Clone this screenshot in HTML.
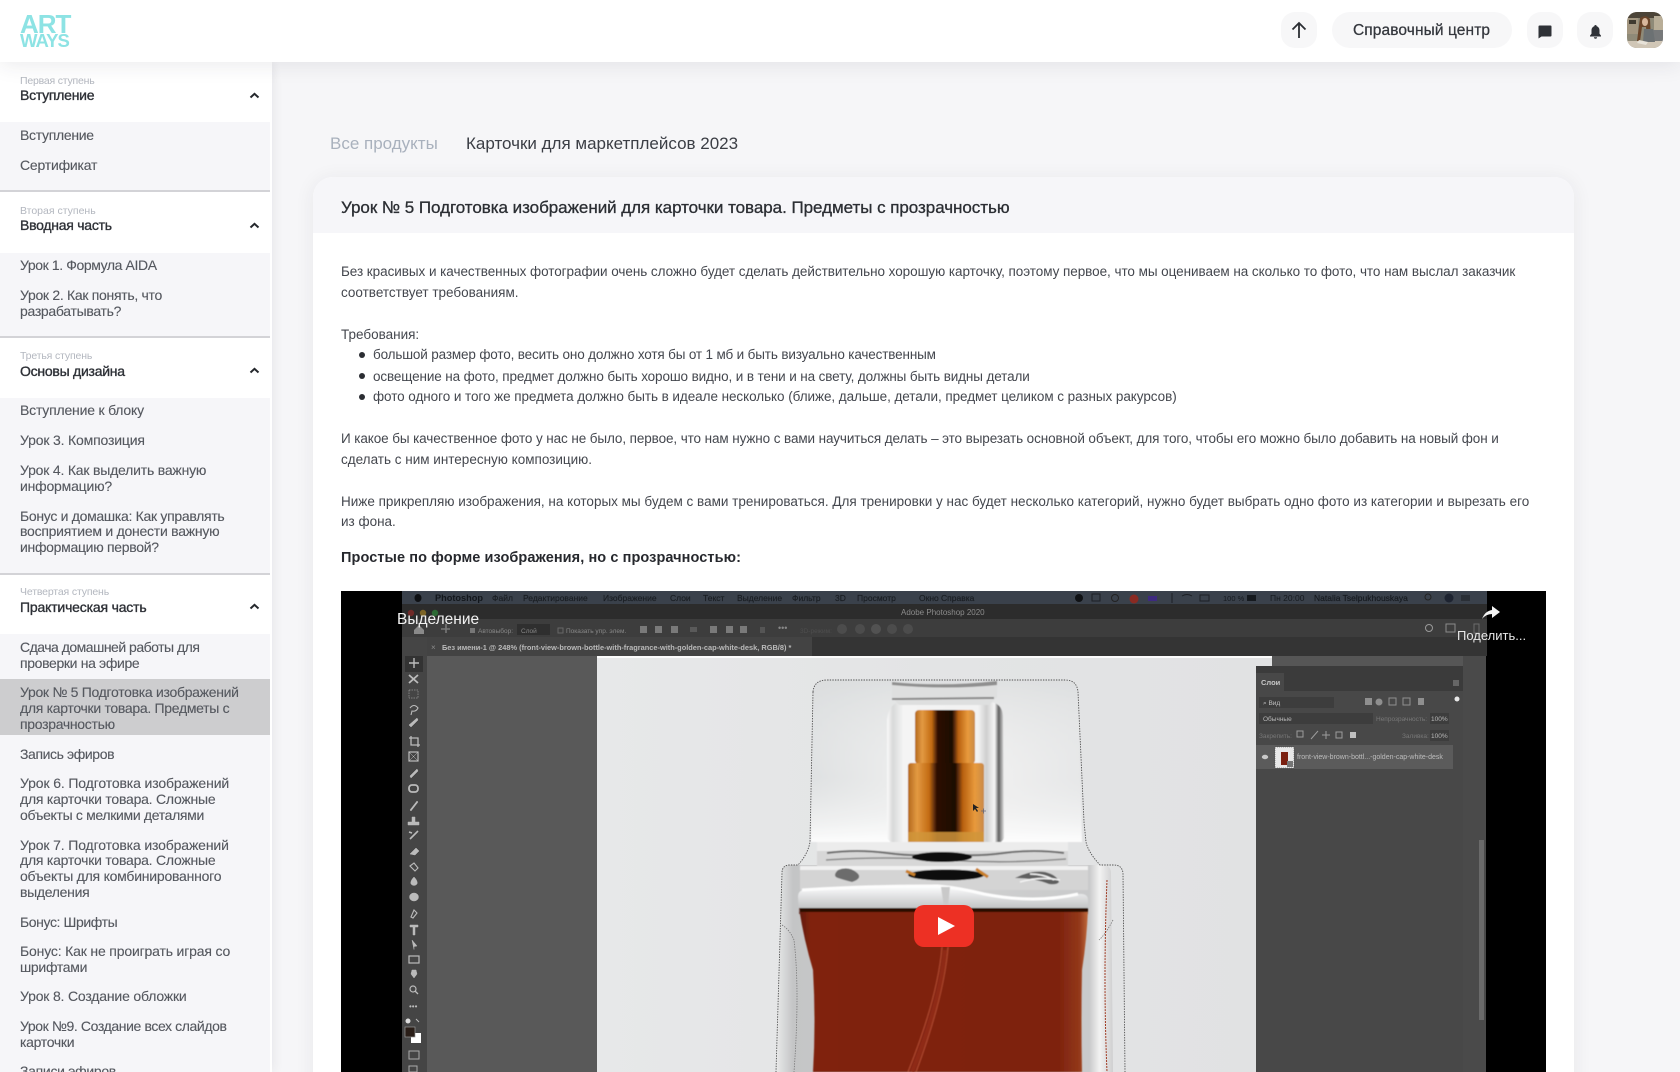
<!DOCTYPE html>
<html lang="ru">
<head>
<meta charset="utf-8">
<title>Урок № 5</title>
<style>
html,body{margin:0;padding:0;width:1680px;height:1072px;overflow:hidden;background:#f6f6f8}
body{font-family:"Liberation Sans","DejaVu Sans",sans-serif;position:relative}
#wrap{position:absolute;inset:0;overflow:hidden;filter:blur(.35px)}
.t{position:absolute;white-space:nowrap;line-height:20px;height:20px}
header{position:absolute;left:0;top:0;width:1680px;height:62px;background:#fff;box-shadow:0 2px 22px rgba(40,40,60,.10);z-index:5}
.btn{position:absolute;top:12px;height:36px;background:#f7f7f8;border-radius:14px}
aside{position:absolute;left:0;top:62px;width:272px;height:1010px;background:#fff;box-shadow:2px 0 10px rgba(40,40,60,.07);z-index:3}
.bg{position:absolute;left:0;width:270px;background:#f6f6f9}
.div{position:absolute;left:0;width:270px;height:2px;background:#d3d3d7}
.lab{font-size:10.5px;color:#b3b7bf;letter-spacing:-.15px}
.ttl{font-size:14px;color:#2d3036;-webkit-text-stroke:.35px #2d3036;letter-spacing:-.25px}
.it{font-size:14px;color:#55585f;left:20px;letter-spacing:-.3px;-webkit-text-stroke:.12px #55585f}
.chev{position:absolute;left:249px;width:11px;height:7px}
#card{position:absolute;left:313px;top:177px;width:1261px;height:920px;background:#fff;border-radius:20px 20px 0 0;box-shadow:0 2px 20px rgba(40,40,60,.07);z-index:1}
#cardh{position:absolute;left:0;top:0;width:1261px;height:56px;background:#f6f6f9;border-radius:20px 20px 0 0}
.b{font-size:13.5px;color:#44474e;left:341px}
.li{font-size:13.5px;color:#44474e;left:373px}
.dot{position:absolute;left:359px;width:6px;height:6px;border-radius:50%;background:#2b2d33}
#video{position:absolute;left:341px;top:591px;width:1205px;height:481px;z-index:2}
</style>
</head>
<body>
<div id="wrap">

<header>
  <div class="t" style="left:20px;top:12px;font-size:26px;font-weight:bold;color:#8de3e4;letter-spacing:-1px;line-height:24px;height:24px">ART</div>
  <div class="t" style="left:20px;top:31px;font-size:18.5px;font-weight:bold;color:#8de3e4;letter-spacing:-1px">WAYS</div>

  <div class="btn" style="left:1281px;width:36px"></div>
  <svg style="position:absolute;left:1291px;top:21px" width="16" height="18" viewBox="0 0 16 18"><path d="M8 17V2M1.5 8.5L8 2l6.5 6.5" fill="none" stroke="#2b2e33" stroke-width="1.8"/></svg>
  <div class="btn" style="left:1332px;width:180px;border-radius:18px"></div>
  <div class="t" style="left:1353px;top:21px;font-size:15.5px;color:#33363c;-webkit-text-stroke:.25px #33363c;letter-spacing:.1px">Справочный центр</div>
  <div class="btn" style="left:1527px;width:36px"></div>
  <svg style="position:absolute;left:1538px;top:25px" width="14" height="14" viewBox="0 0 14 14"><path d="M1.5 0.5h11a1 1 0 0 1 1 1v9a1 1 0 0 1-1 1H3.5L.5 13.5v-12a1 1 0 0 1 1-1z" fill="#2f3237"/></svg>
  <div class="btn" style="left:1577px;width:36px"></div>
  <svg style="position:absolute;left:1590px;top:25px" width="11" height="14" viewBox="0 0 11 14"><path d="M5.5 0C6.3 0 6.7.6 6.7 1.2 8.6 1.8 9.5 3.4 9.5 5.4v3.4L11 10.6v.9H0v-.9l1.5-1.8V5.4c0-2 .9-3.6 2.8-4.2C4.3.6 4.7 0 5.5 0zM3.9 12.3h3.2c0 .9-.7 1.5-1.6 1.500s-1.600-.6-1.600-1.500z" fill="#2f3237"/></svg>
  <svg style="position:absolute;left:1627px;top:12px;border-radius:10px" width="36" height="36" viewBox="0 0 36 36">
    <rect width="36" height="36" fill="#8f8a78"/>
    <rect x="0" y="0" width="36" height="6" fill="#4c4438"/>
    <rect x="0" y="6" width="11" height="16" fill="#a39680"/>
    <rect x="2" y="8" width="7" height="4" fill="#3f3a30"/>
    <rect x="27" y="4" width="9" height="14" fill="#b9ae98"/>
    <rect x="26" y="18" width="10" height="12" fill="#77797a"/>
    <rect x="0" y="29" width="36" height="7" fill="#d0c6b6"/>
    <path d="M13 6q6-4 10 1l1 20h-4l-1-12-4 0-2 14h-3z" fill="#6a452a"/>
    <ellipse cx="18" cy="10" rx="3" ry="4" fill="#d8b79c"/>
    <path d="M17 17h9l2 13H16z" fill="#6c7173"/>
    <path d="M12 28l9 2-2 3-9-2z" fill="#e7e2d8"/>
  </svg>
</header>

<aside>
  <!-- section 1 -->
  <div class="t lab" style="left:20px;top:9px;letter-spacing:-.2px">Первая ступень</div>
  <div class="t ttl" style="left:20px;top:23px">Вступление</div>
  <svg class="chev" style="top:30px" viewBox="0 0 11 7"><path d="M1.5 5.5L5.5 1.8l4 3.7" fill="none" stroke="#24272c" stroke-width="2"/></svg>
  <div class="bg" style="top:60px;height:68px"></div>
  <div class="t it" style="top:63px">Вступление</div>
  <div class="t it" style="top:93px;letter-spacing:-.2px">Сертификат</div>
  <div class="div" style="top:128px"></div>

  <!-- section 2 -->
  <div class="t lab" style="left:20px;top:139px;letter-spacing:0">Вторая ступень</div>
  <div class="t ttl" style="left:20px;top:153px">Вводная часть</div>
  <svg class="chev" style="top:160px" viewBox="0 0 11 7"><path d="M1.5 5.5L5.5 1.8l4 3.7" fill="none" stroke="#24272c" stroke-width="2"/></svg>
  <div class="bg" style="top:191px;height:83px"></div>
  <div class="t it" style="top:193px;letter-spacing:-.4px">Урок 1. Формула AIDA</div>
  <div class="t it" style="top:223px">Урок 2. Как понять, что</div>
  <div class="t it" style="top:239px">разрабатывать?</div>
  <div class="div" style="top:274px"></div>

  <!-- section 3 -->
  <div class="t lab" style="left:20px;top:284px">Третья ступень</div>
  <div class="t ttl" style="left:20px;top:298.500px">Основы дизайна</div>
  <svg class="chev" style="top:305px" viewBox="0 0 11 7"><path d="M1.5 5.5L5.5 1.8l4 3.7" fill="none" stroke="#24272c" stroke-width="2"/></svg>
  <div class="bg" style="top:336px;height:175px"></div>
  <div class="t it" style="top:338px;letter-spacing:-.2px">Вступление к блоку</div>
  <div class="t it" style="top:368px;letter-spacing:-.17px">Урок 3. Композиция</div>
  <div class="t it" style="top:398px;letter-spacing:-.2px">Урок 4. Как выделить важную</div>
  <div class="t it" style="top:414px;letter-spacing:-.2px">информацию?</div>
  <div class="t it" style="top:444px">Бонус и домашка: Как управлять</div>
  <div class="t it" style="top:459px;letter-spacing:-.25px">восприятием и донести важную</div>
  <div class="t it" style="top:475px">информацию первой?</div>
  <div class="div" style="top:511px"></div>

  <!-- section 4 -->
  <div class="t lab" style="left:20px;top:520px">Четвертая ступень</div>
  <div class="t ttl" style="left:20px;top:534.500px;letter-spacing:-.18px">Практическая часть</div>
  <svg class="chev" style="top:541px" viewBox="0 0 11 7"><path d="M1.5 5.5L5.5 1.8l4 3.7" fill="none" stroke="#24272c" stroke-width="2"/></svg>
  <div class="bg" style="top:572px;height:438px"></div>
  <div class="t it" style="top:575px;letter-spacing:-.5px">Сдача домашней работы для</div>
  <div class="t it" style="top:591px;letter-spacing:-.35px">проверки на эфире</div>
  <div style="position:absolute;left:0;top:617px;width:270px;height:56px;background:#cdcdcf"></div>
  <div class="t it" style="top:620px">Урок № 5 Подготовка изображений</div>
  <div class="t it" style="top:636px">для карточки товара. Предметы с</div>
  <div class="t it" style="top:652px">прозрачностью</div>
  <div class="t it" style="top:681.500px;letter-spacing:-.4px">Запись эфиров</div>
  <div class="t it" style="top:711px;letter-spacing:-.13px">Урок 6. Подготовка изображений</div>
  <div class="t it" style="top:727px;letter-spacing:-.23px">для карточки товара. Сложные</div>
  <div class="t it" style="top:743px;letter-spacing:-.33px">объекты с мелкими деталями</div>
  <div class="t it" style="top:773px;letter-spacing:-.14px">Урок 7. Подготовка изображений</div>
  <div class="t it" style="top:788px;letter-spacing:-.23px">для карточки товара. Сложные</div>
  <div class="t it" style="top:804px;letter-spacing:-.23px">объекты для комбинированного</div>
  <div class="t it" style="top:820px">выделения</div>
  <div class="t it" style="top:849.500px;letter-spacing:-.4px">Бонус: Шрифты</div>
  <div class="t it" style="top:879px;letter-spacing:-.17px">Бонус: Как не проиграть играя со</div>
  <div class="t it" style="top:895px">шрифтами</div>
  <div class="t it" style="top:924px;letter-spacing:-.18px">Урок 8. Создание обложки</div>
  <div class="t it" style="top:954px;letter-spacing:-.39px">Урок №9. Создание всех слайдов</div>
  <div class="t it" style="top:970px">карточки</div>
  <div class="t it" style="top:999px">Записи эфиров</div>
</aside>

<main>
  <div class="t" style="left:330px;top:134px;font-size:17px;color:#a9b1bd">Все продукты</div>
  <div class="t" style="left:466px;top:134px;font-size:17px;color:#3b3e45">Карточки для маркетплейсов 2023</div>

  <div id="card"><div id="cardh"></div></div>

  <div style="position:absolute;inset:0;z-index:2">
    <div class="t" style="left:341px;top:198px;font-size:17px;letter-spacing:-.04px;color:#2b2e33;-webkit-text-stroke:.3px #2b2e33">Урок № 5 Подготовка изображений для карточки товара. Предметы с прозрачностью</div>
    <div class="t b" style="top:261.500px;letter-spacing:-.05px">Без красивых и качественных фотографии очень сложно будет сделать действительно хорошую карточку, поэтому первое, что мы оцениваем на сколько то фото, что нам выслал заказчик</div>
    <div class="t b" style="top:282.500px">соответствует требованиям.</div>
    <div class="t b" style="top:324.500px">Требования:</div>
    <div class="dot" style="top:352px"></div>
    <div class="t li" style="top:345px;letter-spacing:-.15px">большой размер фото, весить оно должно хотя бы от 1 мб и быть визуально качественным</div>
    <div class="dot" style="top:373px"></div>
    <div class="t li" style="top:366.500px;letter-spacing:-.12px">освещение на фото, предмет должно быть хорошо видно, и в тени и на свету, должны быть видны детали</div>
    <div class="dot" style="top:394px"></div>
    <div class="t li" style="top:387px;letter-spacing:-.06px">фото одного и того же предмета должно быть в идеале несколько (ближе, дальше, детали, предмет целиком с разных ракурсов)</div>
    <div class="t b" style="top:428.500px;letter-spacing:-.1px">И какое бы качественное фото у нас не было, первое, что нам нужно с вами научиться делать – это вырезать основной объект, для того, чтобы его можно было добавить на новый фон и</div>
    <div class="t b" style="top:449.500px">сделать с ним интересную композицию.</div>
    <div class="t b" style="top:491.500px">Ниже прикрепляю изображения, на которых мы будем с вами тренироваться. Для тренировки у нас будет несколько категорий, нужно будет выбрать одно фото из категории и вырезать его</div>
    <div class="t b" style="top:512px">из фона.</div>
    <div class="t" style="left:341px;top:548px;font-size:14.5px;font-weight:bold;letter-spacing:.085px;color:#26282d">Простые по форме изображения, но с прозрачностью:</div>
  </div>

  <svg id="video" viewBox="341 591 1205 481" xmlns="http://www.w3.org/2000/svg" font-family="Liberation Sans, sans-serif">
    <defs>
      <filter id="soft" x="-5%" y="-5%" width="110%" height="110%"><feGaussianBlur stdDeviation=".6"/></filter>
      <filter id="soft2" x="-10%" y="-10%" width="120%" height="120%"><feGaussianBlur stdDeviation="1.6"/></filter>
      <linearGradient id="cap" x1="0" x2="1" y1="0" y2="0"><stop offset="0" stop-color="#dfe1e2"/><stop offset=".28" stop-color="#eaebeb"/><stop offset=".72" stop-color="#eeeeee"/><stop offset="1" stop-color="#e6e7e8"/></linearGradient>
      <linearGradient id="capv" x1="0" x2="0" y1="0" y2="1"><stop offset="0" stop-color="#d9dbdc" stop-opacity=".7"/><stop offset=".6" stop-color="#ebecec" stop-opacity="0"/><stop offset="1" stop-color="#fff" stop-opacity=".9"/></linearGradient>
      <linearGradient id="glass" x1="0" x2="1" y1="0" y2="0"><stop offset="0" stop-color="#fafafa"/><stop offset=".05" stop-color="#d8d9d9"/><stop offset=".14" stop-color="#f4f4f4"/><stop offset=".78" stop-color="#f2f2f2"/><stop offset=".85" stop-color="#cfcfcf"/><stop offset=".92" stop-color="#f7f7f7"/><stop offset=".955" stop-color="#5f5f5f"/><stop offset="1" stop-color="#e2e2e2"/></linearGradient>
      <linearGradient id="gold" x1="0" x2="1" y1="0" y2="0"><stop offset="0" stop-color="#b3681c"/><stop offset=".12" stop-color="#e39a42"/><stop offset=".28" stop-color="#c26a12"/><stop offset=".38" stop-color="#2d0f04"/><stop offset=".62" stop-color="#1c0a04"/><stop offset=".72" stop-color="#b8600f"/><stop offset=".88" stop-color="#e89a3c"/><stop offset="1" stop-color="#c98a48"/></linearGradient>
      <linearGradient id="body" x1="0" x2="1" y1="0" y2="0"><stop offset="0" stop-color="#e9eaea"/><stop offset=".05" stop-color="#c4c5c6"/><stop offset=".5" stop-color="#d0d0d0"/><stop offset=".93" stop-color="#c9cacb"/><stop offset=".96" stop-color="#f2f2f2"/><stop offset="1" stop-color="#cfcfd0"/></linearGradient>
      <linearGradient id="liq" x1="0" x2="1" y1="0" y2="0"><stop offset="0" stop-color="#5f1a0b"/><stop offset=".04" stop-color="#80230f"/><stop offset=".9" stop-color="#7e230f"/><stop offset=".97" stop-color="#93381a"/><stop offset="1" stop-color="#c06a3c"/></linearGradient>
      <linearGradient id="air" x1="0" x2="0" y1="0" y2="1"><stop offset="0" stop-color="#ffffff"/><stop offset=".3" stop-color="#e6e7e8"/><stop offset=".8" stop-color="#c2c3c4"/><stop offset="1" stop-color="#6a3a30"/></linearGradient>
      <linearGradient id="canvas" x1="0" x2="1" y1="0" y2="0"><stop offset="0" stop-color="#e7e8e9"/><stop offset=".5" stop-color="#e3e4e5"/><stop offset="1" stop-color="#e1e2e3"/></linearGradient>
    </defs>
    <rect x="341" y="591" width="1205" height="481" fill="#000"/>

    <!-- photoshop window -->
    <rect x="402" y="591" width="1085" height="13" fill="#3a414b"/>
    <rect x="402" y="604" width="1085" height="15" fill="#2c2c2c"/>
    <rect x="402" y="619" width="1085" height="18" fill="#3d3d3d"/>
    <rect x="402" y="637" width="1085" height="19" fill="#343434"/>
    <rect x="427" y="637" width="385" height="19" fill="#434343"/>
    <rect x="402" y="637" width="25" height="435" fill="#454545"/>
    <rect x="427" y="656" width="170" height="416" fill="#595959"/>
    <rect x="597" y="656" width="675" height="416" fill="url(#canvas)"/>
    <rect x="597" y="656" width="675" height="2" fill="#fbfbfb"/>
    <rect x="1272" y="656" width="214" height="416" fill="#565656"/>
    <rect x="1463" y="656" width="23" height="416" fill="#4a4a4a"/>
    <rect x="1479" y="840" width="5" height="180" fill="#6a6a6a"/>

    <!-- menu bar -->
    <g font-size="8.5" fill="#12161b" font-weight="bold">
      <ellipse cx="418" cy="598" rx="3.5" ry="4" fill="#0d0f12"/>
      <text x="435" y="601" font-size="9.2">Photoshop</text>
      <g font-weight="normal" fill="#191d22" stroke="#191d22" stroke-width=".15">
      <text x="492" y="601">Файл</text><text x="523" y="601">Редактирование</text><text x="603" y="601">Изображение</text><text x="670" y="601">Слои</text><text x="703" y="601">Текст</text><text x="737" y="601">Выделение</text><text x="792" y="601">Фильтр</text><text x="835" y="601">3D</text><text x="857" y="601">Просмотр</text><text x="919" y="601">Окно</text><text x="941" y="601">Справка</text>
      </g>
    </g>
    <g>
      <circle cx="1079" cy="598" r="4" fill="#0f1114"/>
      <rect x="1092" y="594" width="8" height="7" fill="none" stroke="#1c1f24"/>
      <circle cx="1115" cy="598" r="3.5" fill="none" stroke="#222"/>
      <circle cx="1134" cy="599" r="4.5" fill="#8a2a22"/>
      <rect x="1148" y="596" width="9" height="5" fill="#3e2a80"/>
      <path d="M1172 593v10M1182 596q5-3 10 0M1200 595h9v6h-9z" stroke="#1c1f24" fill="none"/>
    </g>
    <g font-size="8.5" fill="#15191e">
      <text x="1223" y="601" font-size="7.5">100 %</text>
      <rect x="1247" y="595" width="9" height="6" fill="#15191e"/>
      <text x="1270" y="601">Пн 20:00</text>
      <text x="1314" y="601" stroke="#15191e" stroke-width=".15">Natalia Tselpukhouskaya</text>
      <circle cx="1428" cy="597" r="3" fill="none" stroke="#222"/>
      <circle cx="1449" cy="598" r="4.5" fill="#1d2330"/>
      <rect x="1461" y="595" width="9" height="6" fill="#2a2f36"/>
    </g>
    <!-- title bar -->
    <circle cx="411" cy="613" r="3.2" fill="#702a28"/><circle cx="423" cy="613" r="3.2" fill="#7c6426"/><circle cx="435" cy="613" r="3.2" fill="#2d6a35"/>
    <text x="901" y="615" font-size="8" fill="#8c8c8c">Adobe Photoshop 2020</text>

    <!-- options bar -->
    <g fill="#888" font-size="6.5">
      <path d="M414 630l5-5 5 5v4h-10z" fill="#8a8a8a"/>
      <path d="M446 624v9M441 629h9" stroke="#777" stroke-width="1.6"/>
      <rect x="470" y="628" width="5" height="5" fill="#777"/>
      <text x="478" y="633">Автовыбор:</text>
      <rect x="517" y="624" width="33" height="11" fill="#2f2f2f"/>
      <text x="521" y="633">Слой</text>
      <rect x="558" y="628" width="5" height="5" fill="none" stroke="#666"/>
      <text x="566" y="633">Показать упр. элем.</text>
      <rect x="640" y="626" width="7" height="7" fill="#7a7a7a"/><rect x="655" y="626" width="7" height="7" fill="#7a7a7a"/><rect x="671" y="626" width="7" height="7" fill="#7a7a7a"/><rect x="690" y="627" width="7" height="5" fill="#5a5a5a"/>
      <rect x="710" y="626" width="7" height="7" fill="#7a7a7a"/><rect x="726" y="626" width="7" height="7" fill="#7a7a7a"/><rect x="740" y="626" width="7" height="7" fill="#7a7a7a"/><rect x="760" y="627" width="5" height="6" fill="#555"/>
      <text x="778" y="631" font-size="9">•••</text>
      <text x="800" y="633" fill="#4e4e4e">3D-режим:</text>
      <circle cx="842" cy="629" r="5" fill="#4c4c4c"/><circle cx="860" cy="629" r="5" fill="#4c4c4c"/><circle cx="876" cy="629" r="5" fill="#525252"/><circle cx="892" cy="629" r="5" fill="#4c4c4c"/><circle cx="908" cy="629" r="5" fill="#4c4c4c"/>
      <circle cx="1429" cy="628" r="3.5" fill="none" stroke="#9a9a9a"/>
      <rect x="1446" y="624" width="9" height="8" fill="none" stroke="#8a8a8a"/>
      <path d="M1474 624h5v9h-5z" fill="none" stroke="#6c6c6c"/>
    </g>
    <!-- tab -->
    <text x="431" y="650" font-size="8" fill="#8b8b8b">×</text>
    <text x="442" y="650" font-size="7.4" font-weight="bold" fill="#bababa">Без имени-1 @ 248% (front-view-brown-bottle-with-fragrance-with-golden-cap-white-desk, RGB/8) *</text>

    <!-- tools -->
    <rect x="405" y="656" width="18" height="16" fill="#333"/>
    <g fill="#bbb" stroke="#bbb" stroke-width=".5">
      <path d="M414 658v10M409 663h10" stroke-width="1.4" fill="none"/>
      <path d="M409 675l9 8M418 675l-9 8" stroke-width="1.8" fill="none"/>
      <rect x="409" y="690" width="9" height="8" fill="none" stroke-dasharray="1.5 1"/>
      <path d="M410 708q4-5 8 0q-2 4-6 3l-1 4" fill="none" stroke-width="1.1"/>
      <path d="M409 725l8-7 1 2-7 7z"/>
      <path d="M411 736v9h9M409 738h9v9" fill="none" stroke-width="1.3"/>
      <rect x="409" y="752" width="9" height="9" fill="none" stroke-width="1.2"/><path d="M409 752l9 9M418 752l-9 9" fill="none"/>
      <path d="M410 776l7-7 1 2-7 7z"/>
      <rect x="409" y="785" width="9" height="7" rx="3" fill="none" stroke-width="1.8"/>
      <path d="M410 810l7-9 1 1-7 9z"/>
      <path d="M412 817h3v5h4v3h-11v-3h4z"/>
      <path d="M410 839l8-8M409 832l3 1" stroke-width="1.6" fill="none"/>
      <path d="M410 854l6-6 3 3-4 4z"/>
      <path d="M410 866l4-3 4 5-3 3z" fill="none" stroke-width="1.1"/>
      <path d="M414 877q4 4 3 7q-3 3-6 0q-1-3 3-7z"/>
      <ellipse cx="414" cy="897" rx="4.5" ry="4"/>
      <path d="M411 917l3-7 3 3-4 5z" fill="none" stroke-width="1.1"/>
      <path d="M410 925h8v2h-3v8h-2v-8h-3z"/>
      <path d="M412 940l5 6-3 .5 0 3z"/>
      <rect x="409" y="956" width="10" height="7" fill="none" stroke-width="1.2"/>
      <path d="M411 974l1-4 4 0 1 4-3 4z"/>
      <circle cx="413" cy="989" r="3" fill="none" stroke-width="1.2"/><path d="M415 991l3 3" stroke-width="1.3"/>
      <text x="409" y="1009" font-size="8" stroke="none">•••</text>
    </g>
    <circle cx="408" cy="1021" r="2.5" fill="#ddd"/><path d="M416 1019l3 3" stroke="#bbb"/>
    <rect x="411" y="1033" width="10" height="10" fill="#fff"/>
    <rect x="405" y="1027" width="10" height="10" fill="#2a1e18" stroke="#999" stroke-width=".7"/>
    <rect x="409" y="1051" width="10" height="8" fill="none" stroke="#aaa"/>
    <rect x="409" y="1066" width="8" height="6" fill="none" stroke="#aaa"/>

    <!-- bottle -->
    <path d="M782 872q0-7 8-7h312q9 0 9 8l2 199H776z" fill="url(#body)"/>
    <g filter="url(#soft)">
      <!-- glass stopper -->
      <path d="M813 692q1-12 14-12h238q12 0 13 12l4 150H811z" fill="url(#cap)"/>
      <path d="M813 692q1-12 14-12h238q12 0 13 12l4 150H811z" fill="url(#capv)"/>
      <path d="M887 720q2-18 15-18h86q14 0 15 14l1 122q-2 6-12 6h-92q-12 0-13-8z" fill="url(#glass)"/>
      <path d="M892 682q50 5 105-1v16l-8 8h-90l-7-8z" fill="#dedfdf"/>
      <path d="M892 682q50 5 105-1l0 4q-50 5-105 0z" fill="#8f8f8f"/>
      <path d="M892 699l8 0 86-1 8 0" stroke="#8a8a8a" stroke-width="2" fill="none"/>
      <rect x="915" y="710" width="60" height="54" rx="4" fill="url(#gold)"/>
      <rect x="908" y="763" width="76" height="80" rx="3" fill="url(#gold)"/>
      <rect x="908" y="832" width="76" height="11" fill="#d0953a" opacity=".85"/>
      <rect x="894" y="843" width="102" height="4" fill="#c58a3e"/>
      <!-- neck -->
      <rect x="817" y="842" width="251" height="24" fill="#d7d7d7"/>
      <rect x="817" y="842" width="251" height="9" fill="#ececec"/>
      <path d="M827 853q30-4 60 0t56 1M1064 853q-30-4-60 0t-56 1" stroke="#6f6f6f" stroke-width="2" fill="none"/>
      <path d="M826 860q60-4 120 0t120-1" stroke="#8a8a8a" stroke-width="1.6" fill="none"/>
      <ellipse cx="942" cy="857" rx="30" ry="5" fill="#0b0b0b"/>
      <!-- shoulder -->
      <rect x="800" y="866" width="288" height="24" fill="#d4d4d4"/>
      <path d="M800 866h288v4H800z" fill="#f1f1f1"/>
      <path d="M838 870q10-4 18 2 8 6-4 10-8-2-14-4t0-8z" fill="#6c6c6c"/>
      <path d="M1015 878q15-8 30-6 12 3 14 10-2 3-10 2-15-6-34-6z" fill="#5e5e5e"/>
      <path d="M1020 882q20-6 40-2M1030 874q14 0 24 6" stroke="#f3f3f3" stroke-width="1.6" fill="none"/>
      <ellipse cx="946" cy="875" rx="38" ry="5.500" fill="#0c0c0c"/>
      <path d="M906 871l9 4M976 869l12 8" stroke="#c9802a" stroke-width="3"/>
      <!-- air gap -->
      <path d="M798 897q0-8 10-8 60-4 130-3 22 2 46 8 50 10 94 0 10-1 10 6v14H799z" fill="url(#air)"/>
      <path d="M802 890q60-4 136-4 22 2 46 8 50 10 94 0" stroke="#fdfdfd" stroke-width="3" fill="none"/>
      <path d="M941 887h9l-2 20h-4z" fill="#c9c9c9"/>
      <!-- liquid -->
      <path d="M799 908h289q-1 30-6 62-1 50 0 102H813q3-50 0-102-9-30-14-62z" fill="url(#liq)"/>
      <rect x="800" y="908" width="288" height="4" fill="#2c0c06"/>
      <path d="M948 947q-4 50-32 125M942 947q-4 50-34 125" stroke="#a8432a" stroke-width="1.4" fill="none"/>
      <path d="M945 950q-4 50-33 122" stroke="#8f2c16" stroke-width="4" fill="none"/>
    </g>
    <path d="M813 692q1-12 14-12h238q12 0 13 12l6 130 2 20q2 10 14 23h14q8 0 9 8l2 199" fill="none" stroke="#505050" stroke-width=".9" stroke-dasharray="1.400 1.200"/>
    <path d="M813 692l-3 150q-2 12-12 23h-8q-8 0-8 8l-6 199" fill="none" stroke="#505050" stroke-width=".9" stroke-dasharray="1.400 1.200"/>
    <path d="M782 925q8 5 12 15q6 50 0 132M1113 920q-8 15-14 20" stroke="#777" stroke-width=".8" stroke-dasharray="1.400 1.200" fill="none"/>
    <path d="M1107 880q-4 100 0 192" stroke="#a03a22" stroke-width="1" fill="none" stroke-dasharray="2 1"/>
    <path d="M973 804l0 7 2-2 2 3 1-1-2-3 3 0z" fill="#222"/><path d="M981 811h5M983.500 808.500v5" stroke="#667" stroke-width=".8"/>

    <!-- layers panel -->
    <rect x="1256" y="666" width="207" height="406" fill="#484848"/>
    <rect x="1256" y="666" width="207" height="25" fill="#3b3b3b"/>
    <rect x="1256" y="673" width="28" height="18" fill="#484848"/>
    <text x="1261" y="685" font-size="7.500" font-weight="bold" fill="#c8c8c8">Слои</text>
    <rect x="1453" y="680" width="6" height="6" fill="#666"/>
    <rect x="1259" y="697" width="75" height="11" fill="#3d3d3d"/>
    <text x="1263" y="705" font-size="6.500" fill="#c0c0c0">⌕ Вид</text>
    <g fill="#8f8f8f"><rect x="1365" y="698" width="7" height="7"/><circle cx="1379" cy="702" r="3.500"/><rect x="1389" y="698" width="7" height="7" fill="none" stroke="#8f8f8f"/><rect x="1403" y="698" width="7" height="7" fill="none" stroke="#8f8f8f"/><rect x="1418" y="698" width="6" height="7"/></g>
    <circle cx="1457" cy="699" r="2.500" fill="#e8e8e8"/>
    <rect x="1259" y="713" width="114" height="11" fill="#3d3d3d"/>
    <text x="1263" y="721" font-size="6.500" fill="#b8b8b8">Обычные</text>
    <text x="1376" y="721" font-size="6.500" fill="#787878">Непрозрачность:</text>
    <rect x="1430" y="713" width="19" height="11" fill="#3d3d3d"/>
    <text x="1431" y="721" font-size="6.500" fill="#b8b8b8">100%</text>
    <text x="1259" y="738" font-size="6.500" fill="#787878">Закрепить:</text>
    <g stroke="#9c9c9c" fill="none"><rect x="1297" y="731" width="6" height="6"/><path d="M1311 739l7-8M1326 731v8M1322 735h8"/><rect x="1336" y="732" width="6" height="6"/></g>
    <rect x="1350" y="732" width="6" height="6" fill="#c0c0c0"/>
    <text x="1402" y="738" font-size="6.500" fill="#787878">Заливка:</text>
    <rect x="1430" y="730" width="19" height="11" fill="#3d3d3d"/>
    <text x="1431" y="738" font-size="6.500" fill="#b8b8b8">100%</text>
    <rect x="1256" y="745" width="197" height="24" fill="#5b5b5b"/>
    <ellipse cx="1265" cy="757" rx="3.200" ry="2.200" fill="#c8c8c8"/>
    <rect x="1275" y="747" width="19" height="21" fill="#e8e8e8" stroke="#444" stroke-dasharray="1 1" stroke-width=".5"/>
    <rect x="1281" y="752" width="7" height="13" fill="#7b2010"/>
    <rect x="1287" y="761" width="6" height="6" fill="#777"/>
    <text x="1297" y="759" font-size="7" fill="#bdbdbd">front-view-brown-bottl...-golden-cap-white-desk</text>

    <!-- youtube overlay -->
    <text x="397" y="624" font-size="15.500" fill="#f2f2f2">Выделение</text>
    <path d="M1482 619q3-8 10-9v-4l8 6-8 6v-4q-6 0-10 5z" fill="#f4f4f4"/>
    <text x="1457" y="640" font-size="13" fill="#e8e8e8">Поделить...</text>
    <rect x="914" y="905" width="60" height="42" rx="10" fill="#ed3024"/>
    <path d="M938 917l17 9-17 9z" fill="#fff"/>
  </svg>
</main>
</div>
</body>
</html>
